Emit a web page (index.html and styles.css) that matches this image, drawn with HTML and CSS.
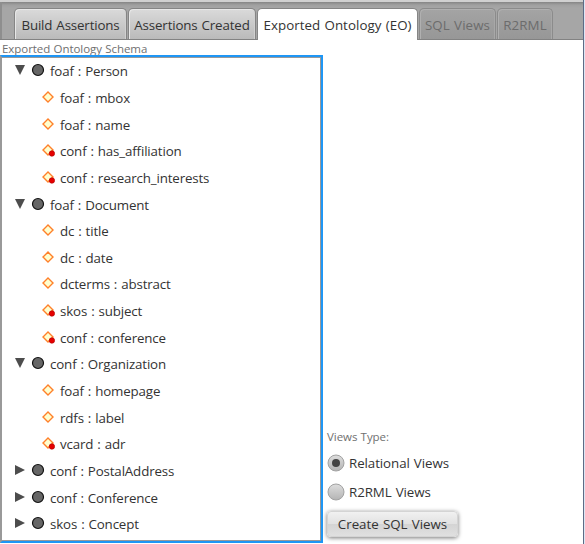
FILE: index.html
```html
<!DOCTYPE html>
<html lang="en">
<head>
<meta charset="utf-8">
<title>Exported Ontology</title>
<link rel="stylesheet" href="styles.css">
</head>
<body>
<svg class="defs" width="0" height="0" aria-hidden="true">
  <defs>
    <linearGradient id="ball" x1="0" y1="0" x2="0" y2="1"><stop offset="0" stop-color="#dedede"/><stop offset="1" stop-color="#b4b4b4"/></linearGradient>
    <symbol id="open" viewBox="0 0 12 12"><path d="M1 1h10L6 11z" fill="#4d4d4d"/></symbol>
    <symbol id="shut" viewBox="0 0 12 12"><path d="M1 1v10l10-5z" fill="#4d4d4d"/></symbol>
    <symbol id="class" viewBox="0 0 14 14"><circle cx="7" cy="7" r="5.5" fill="#666" stroke="#111" stroke-width="1.2"/></symbol>
    <symbol id="prop" viewBox="0 0 14 14"><path d="M7 2.1 12 7.1 7 12.1 2 7.1z" fill="#ffffcf" stroke="#ff8029" stroke-width="1.4"/></symbol>
    <symbol id="objprop" viewBox="0 0 14 14"><path d="M7 2.1 12 7.1 7 12.1 2 7.1z" fill="#ffffcf" stroke="#ff8029" stroke-width="1.4"/><circle cx="10.9" cy="10.5" r="2.7" fill="#e60000" stroke="#b40000" stroke-width=".7"/></symbol>
    <symbol id="radio" viewBox="0 0 18 18"><circle cx="9" cy="9" r="8" fill="url(#ball)" stroke="#a2a2a2"/></symbol>
  </defs>
</svg>
<div class="app">
  <header class="tabs">
    <div class="tab build"><span>Build Assertions</span></div>
    <div class="tab created"><span>Assertions Created</span></div>
    <div class="tab exported active"><span>Exported Ontology (EO)</span></div>
    <div class="tab sql disabled"><span>SQL Views</span></div>
    <div class="tab rml disabled"><span>R2RML</span></div>
  </header>
  <div class="caption">Exported Ontology Schema</div>
  <main class="content">
    <div class="tree">
      <div class="row"><svg class="arrow"><use href="#open"/></svg><svg class="icon"><use href="#class"/></svg><span>foaf : Person</span></div>
      <div class="row child"><svg class="icon"><use href="#prop"/></svg><span>foaf : mbox</span></div>
      <div class="row child"><svg class="icon"><use href="#prop"/></svg><span>foaf : name</span></div>
      <div class="row child"><svg class="icon"><use href="#objprop"/></svg><span>conf : has_affiliation</span></div>
      <div class="row child"><svg class="icon"><use href="#objprop"/></svg><span>conf : research_interests</span></div>
      <div class="row"><svg class="arrow"><use href="#open"/></svg><svg class="icon"><use href="#class"/></svg><span>foaf : Document</span></div>
      <div class="row child"><svg class="icon"><use href="#prop"/></svg><span>dc : title</span></div>
      <div class="row child"><svg class="icon"><use href="#prop"/></svg><span>dc : date</span></div>
      <div class="row child"><svg class="icon"><use href="#prop"/></svg><span>dcterms : abstract</span></div>
      <div class="row child"><svg class="icon"><use href="#objprop"/></svg><span>skos : subject</span></div>
      <div class="row child"><svg class="icon"><use href="#objprop"/></svg><span>conf : conference</span></div>
      <div class="row"><svg class="arrow"><use href="#open"/></svg><svg class="icon"><use href="#class"/></svg><span>conf : Organization</span></div>
      <div class="row child"><svg class="icon"><use href="#prop"/></svg><span>foaf : homepage</span></div>
      <div class="row child"><svg class="icon"><use href="#prop"/></svg><span>rdfs : label</span></div>
      <div class="row child"><svg class="icon"><use href="#objprop"/></svg><span>vcard : adr</span></div>
      <div class="row"><svg class="arrow"><use href="#shut"/></svg><svg class="icon"><use href="#class"/></svg><span>conf : PostalAddress</span></div>
      <div class="row"><svg class="arrow"><use href="#shut"/></svg><svg class="icon"><use href="#class"/></svg><span>conf : Conference</span></div>
      <div class="row"><svg class="arrow"><use href="#shut"/></svg><svg class="icon"><use href="#class"/></svg><span>skos : Concept</span></div>
    </div>
    <aside class="options">
      <div class="hint">Views Type:</div>
      <div class="choice"><svg class="radio" viewBox="0 0 18 18"><use href="#radio"/><circle cx="9" cy="9" r="4" fill="#444"/></svg><span>Relational Views</span></div>
      <div class="choice"><svg class="radio" viewBox="0 0 18 18"><use href="#radio"/></svg><span>R2RML Views</span></div>
      <button class="create">Create SQL Views</button>
    </aside>
  </main>
</div>
</body>
</html>
```

FILE: styles.css
```css
* { box-sizing: border-box; }
body {
  margin: 0;
  overflow: hidden;
  background: #fff;
  color: #333;
  font: 13.33px/18px "Open Sans", "Noto Sans", sans-serif;
  letter-spacing: -0.15px;
  word-spacing: 0.7px;
}
.defs { display: block; height: 0; }
.app {
  width: 585px;
  height: 544px;
  display: flex;
  flex-direction: column;
  border-right: 1px solid #dce6f4;
  box-shadow: inset -1px 0 #5e6b85;
}
.tabs {
  height: 40px;
  flex: none;
  display: flex;
  align-items: flex-end;
  gap: 1px;
  padding-left: 14px;
  margin-right: 1px;
  border-top: 2px solid #d0d0d0;
  border-bottom: 1px solid #828282;
  background: linear-gradient(#858585, #a0a0a0 3px, #a6a6a6 6px);
  box-shadow: inset 2px 0 #8e8e8e;
}
.tab {
  height: 31px;
  display: flex;
  justify-content: center;
  align-items: center;
  padding-top: 2px;
  border: 1px solid #858585;
  border-bottom: 0;
  border-radius: 5px 5px 0 0;
  background: linear-gradient(#dadada, #bababa);
  box-shadow: inset 1px 1px #e7e7e7, inset -1px 0 #d0d0d0;
  white-space: nowrap;
}
.build { width: 113px; }
.created { width: 128px; }
.exported { width: 161px; letter-spacing: 0.05px; }
.sql { width: 77px; letter-spacing: 0.1px; }
.rml { width: 56px; letter-spacing: 0.1px; }
.active { height: 32px; margin-bottom: -1px; padding-top: 0; background: #fff; box-shadow: none; }
.disabled {
  color: #6c6c6c;
  background: linear-gradient(#a4a4a4, #979797);
  border-color: #8b8b8b;
  box-shadow: inset 1px 1px #b0b0b0, inset -1px 0 #a8a8a8;
}
.caption, .hint { color: #707070; font-size: 11.5px; letter-spacing: -0.05px; word-spacing: 0.3px; }
.caption { height: 15px; line-height: 18px; padding-left: 2px; }
.content { flex: 1; display: flex; }
.tree {
  width: 323px;
  height: 488px;
  background: #fff;
  border: 2px solid #1e96f5;
  border-left-color: #999;
  box-shadow: inset 0 1px #999, inset -1px 0 #999, inset 0 -1px #999;
}
.row {
  height: 26.65px;
  display: flex;
  align-items: center;
  padding-left: 12px;
  white-space: nowrap;
}
.child { padding-left: 39px; }
.arrow { width: 12px; height: 12px; margin-right: 5px; }
.icon { width: 14px; height: 14px; margin-right: 5px; }
.row span { padding-top: 2px; }
.options { display: flex; flex-direction: column; align-items: flex-start; padding: 373px 0 0 4px; }
.hint { height: 20px; }
.choice { height: 29px; display: flex; align-items: center; gap: 4px; white-space: nowrap; }
.choice span { padding-top: 1px; letter-spacing: -0.08px; }
.radio { width: 18px; height: 18px; }
.create {
  width: 131px;
  height: 26px;
  margin-top: 5px;
  padding: 0;
  border: 1px solid #d4d4d4;
  border-radius: 4px;
  background: linear-gradient(#f1f1f1, #e1e1e1 50%, #d4d4d4 51%, #e0e0e0);
  box-shadow: 0 1px 4px #777;
  color: #333;
  font: inherit;
  letter-spacing: 0;
  word-spacing: inherit;
}
```
